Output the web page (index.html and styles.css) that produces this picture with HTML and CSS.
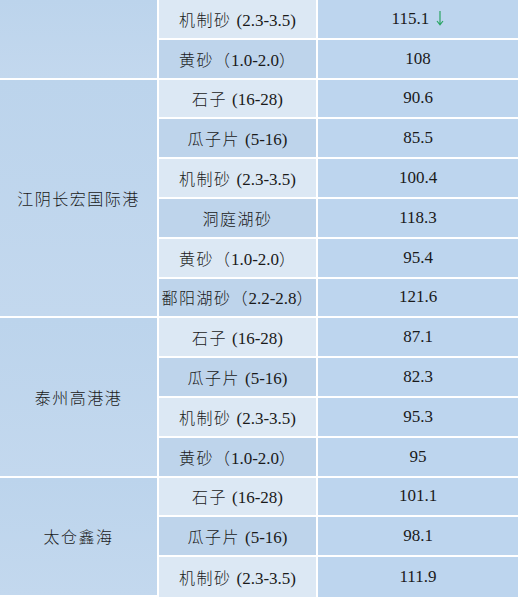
FILE: index.html
```html
<!DOCTYPE html>
<html lang="zh">
<head>
<meta charset="utf-8">
<link rel="stylesheet" href="styles.css">
</head>
<body>
<table class="price-table">
  <colgroup><col class="c-loc"><col class="c-prod"><col class="c-price"></colgroup>
  <tbody>
    <tr><td class="loc" rowspan="2"></td><td class="prod light">机制砂 <span class="num">(2.3-3.5)</span></td><td class="price num">115.1 <svg class="down" width="8" height="16" viewBox="0 0 8 16"><path d="M4 1 V14.5 M1 11 L4 14.8 L7 11" fill="none" stroke="#2aa564" stroke-width="1.2"/></svg></td></tr>
    <tr><td class="prod dark">黄砂<span class="fw">（</span><span class="num">1.0-2.0</span><span class="fw">）</span></td><td class="price num">108</td></tr>

    <tr><td class="loc" rowspan="6">江阴长宏国际港</td><td class="prod light">石子 <span class="num">(16-28)</span></td><td class="price num">90.6</td></tr>
    <tr><td class="prod dark">瓜子片 <span class="num">(5-16)</span></td><td class="price num">85.5</td></tr>
    <tr><td class="prod light">机制砂 <span class="num">(2.3-3.5)</span></td><td class="price num">100.4</td></tr>
    <tr><td class="prod dark">洞庭湖砂</td><td class="price num">118.3</td></tr>
    <tr><td class="prod light">黄砂<span class="fw">（</span><span class="num">1.0-2.0</span><span class="fw">）</span></td><td class="price num">95.4</td></tr>
    <tr><td class="prod dark">鄱阳湖砂<span class="fw">（</span><span class="num">2.2-2.8</span><span class="fw">）</span></td><td class="price num">121.6</td></tr>

    <tr><td class="loc" rowspan="4">泰州高港港</td><td class="prod light">石子 <span class="num">(16-28)</span></td><td class="price num">87.1</td></tr>
    <tr><td class="prod dark">瓜子片 <span class="num">(5-16)</span></td><td class="price num">82.3</td></tr>
    <tr><td class="prod light">机制砂 <span class="num">(2.3-3.5)</span></td><td class="price num">95.3</td></tr>
    <tr><td class="prod dark">黄砂<span class="fw">（</span><span class="num">1.0-2.0</span><span class="fw">）</span></td><td class="price num">95</td></tr>

    <tr><td class="loc" rowspan="3">太仓鑫海</td><td class="prod light">石子 <span class="num">(16-28)</span></td><td class="price num">101.1</td></tr>
    <tr><td class="prod dark">瓜子片 <span class="num">(5-16)</span></td><td class="price num">98.1</td></tr>
    <tr class="last"><td class="prod light">机制砂 <span class="num">(2.3-3.5)</span></td><td class="price num">111.9</td></tr>
  </tbody>
</table>
</body>
</html>
```
FILE: styles.css
```css
html, body {
  margin: 0;
  padding: 0;
  background: #ffffff;
}
.price-table {
  width: 518px;
  border-collapse: separate;
  border-spacing: 0;
  table-layout: fixed;
  font-family: "Noto Sans CJK SC", sans-serif;
  font-size: 16px;
  color: #1a1a1a;
  text-spacing-trim: space-all;
}
.price-table td.num,
.price-table .num {
  font-family: "Liberation Serif", "DejaVu Serif", serif;
  font-size: 17px;
  font-weight: 400;
  letter-spacing: 0;
}
.fw {
  display: inline-block;
  width: 17px;
  text-align: center;
}
.c-loc { width: 159px; }
.c-prod { width: 159px; }
.c-price { width: 200px; }
.price-table td {
  height: 39.8px;
  padding: 0;
  text-align: center;
  vertical-align: middle;
  border-bottom: 2px solid #ffffff;
  border-right: 2px solid #ffffff;
  box-sizing: border-box;
  font-weight: 300;
  white-space: nowrap;
}
.price-table td.price { border-right: 0; }
.price-table tr.last td { border-bottom: 0; }
.price-table td.loc {
  background: linear-gradient(to bottom, #bcd4ec 0%, #c3d8ee 100%);
  letter-spacing: 1.5px;
  font-size: 16px;
}
.prod { letter-spacing: 1.5px; }
.prod.light { background: #dce8f4; }
.prod.dark { background: #bed4eb; }
.price { background: #bdd5ee; }
.down {
  vertical-align: -2px;
  margin-left: 3px;
}
```
